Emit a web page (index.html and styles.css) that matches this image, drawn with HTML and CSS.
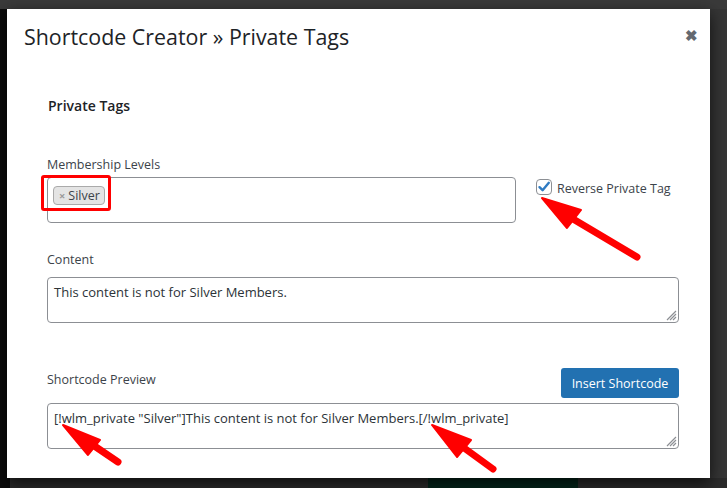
FILE: index.html
```html
<!DOCTYPE html>
<html lang="en">
<head>
    <meta charset="UTF-8">
    <meta name="viewport" content="width=device-width, initial-scale=1.0">
    <title>Shortcode Creator - Private Tags</title>
    <link rel="stylesheet" href="styles.css">
</head>
<body>
    <div class="backdrop">
        <div class="modal">
            <header class="modal-header">
                <h1>Shortcode Creator &raquo; Private Tags</h1>
                <span class="modal-close">&#10006;</span>
            </header>
            <section class="modal-body">
                <h2>Private Tags</h2>

                <label class="field-label">Membership Levels</label>
                <div class="level-row">
                    <div class="select-box">
                        <span class="tag"><span class="tag-remove">&times;</span>Silver</span>
                        <span class="highlight"></span>
                    </div>
                    <label class="check">
                        <span class="check-box">
                            <svg width="14" height="14" viewBox="0 0 14 14"><path d="M2.5 7.2 L5.6 10.2 L11.8 2.8" fill="none" stroke="#2f7bc2" stroke-width="2.4" stroke-linecap="round" stroke-linejoin="round"/></svg>
                        </span>
                        <span class="check-text">Reverse Private Tag</span>
                    </label>
                </div>

                <label class="field-label content-label">Content</label>
                <div class="text-wrap">
                    <textarea class="text-box">This content is not for Silver Members.</textarea>
                    <svg class="grip" width="12" height="12" viewBox="0 0 12 12"><path d="M11 2 L2 11 M11 5 L5 11 M11 8 L8 11" stroke="#8c8f94" stroke-width="1.2"/></svg>
                </div>

                <div class="preview-row">
                    <label class="field-label">Shortcode Preview</label>
                    <button class="insert-btn">Insert Shortcode</button>
                </div>
                <div class="text-wrap">
                    <textarea class="text-box">[!wlm_private "Silver"]This content is not for Silver Members.[/!wlm_private]</textarea>
                    <svg class="grip" width="12" height="12" viewBox="0 0 12 12"><path d="M11 2 L2 11 M11 5 L5 11 M11 8 L8 11" stroke="#8c8f94" stroke-width="1.2"/></svg>
                </div>
            </section>
        </div>
        <div class="page-bottom">
            <div class="green-block"></div>
        </div>
    </div>

    <svg class="arrows" width="727" height="488" viewBox="0 0 727 488">
        <g fill="#f00" stroke="#f00" stroke-linecap="round" stroke-linejoin="round">
            <line x1="637" y1="257" x2="568" y2="216" stroke-width="7"/>
            <polygon points="542,198 581,210 567,228" stroke-width="2"/>
            <line x1="118" y1="462" x2="90" y2="443" stroke-width="7"/>
            <polygon points="63,425 100,440 88,455" stroke-width="2"/>
            <line x1="493" y1="469" x2="460" y2="445" stroke-width="7"/>
            <polygon points="432,425 471,440 457,457" stroke-width="2"/>
        </g>
    </svg>
</body>
</html>
```

FILE: styles.css
```css
body, html {
    margin: 0;
    padding: 0;
    font-family: "Open Sans", Lato, sans-serif;
}

body {
    width: 727px;
    height: 488px;
    overflow: hidden;
    position: relative;
    background: linear-gradient(to right, #0b0b0b 7px, #353535 7px);
}

.backdrop {
    padding-top: 9px;
    background: linear-gradient(to bottom, #3a3a3a 9px, transparent 9px);
}

.modal {
    margin-left: 7px;
    width: 703px;
    height: 469px;
    background: #fff;
    box-shadow: 0 5px 15px rgba(0, 0, 0, 0.7);
    position: relative;
}

.modal-header {
    display: flex;
    align-items: center;
    justify-content: space-between;
    padding: 13px 12px 0 17px;
}

.modal-header h1 {
    margin: 0;
    font-size: 21.4px;
    line-height: 30px;
    font-weight: 400;
    color: #1d2327;
}

.modal-close {
    font-size: 15px;
    color: #646970;
    font-weight: bold;
    margin-top: -4px;
}

.modal-body {
    padding: 44px 31px 0 40px;
}

.modal-body h2 {
    margin: 0 0 40px 1px;
    font-size: 14px;
    line-height: 20px;
    font-weight: 600;
    color: #1d2327;
}

.field-label {
    display: block;
    font-size: 12.5px;
    line-height: 18px;
    color: #3c434a;
    margin-bottom: 3px;
}

.content-label {
    margin-top: 28px;
    margin-bottom: 8px;
}

.level-row {
    display: flex;
    align-items: flex-start;
    gap: 20px;
}

.select-box {
    position: relative;
    box-sizing: border-box;
    width: 469px;
    height: 46px;
    border: 1px solid #8c8f94;
    border-radius: 4px;
    padding: 5px;
}

.tag {
    display: inline-flex;
    align-items: center;
    box-sizing: border-box;
    height: 19px;
    padding: 0 4px 0 5px;
    background: #e4e4e4;
    border: 1px solid #aaa;
    border-radius: 4px;
    font-size: 12.5px;
    color: #3c434a;
}

.tag-remove {
    color: #999;
    font-size: 11px;
    font-weight: bold;
    margin-right: 3px;
}

.highlight {
    position: absolute;
    left: -7px;
    top: -3px;
    width: 64px;
    height: 30px;
    border: 3px solid #f00;
    border-radius: 3px;
}

.check {
    display: flex;
    align-items: flex-start;
    gap: 5px;
    margin-top: 2px;
    font-size: 12.5px;
    color: #3c434a;
}

.check-text {
    line-height: 18px;
    padding-top: 1px;
}

.check-box {
    display: flex;
    align-items: center;
    justify-content: center;
    box-sizing: border-box;
    width: 16px;
    height: 16px;
    border: 1px solid #8c8f94;
    border-radius: 4px;
}

.text-wrap {
    position: relative;
    width: 632px;
}

.text-box {
    display: block;
    box-sizing: border-box;
    width: 632px;
    height: 46px;
    margin: 0;
    padding: 4px 6px;
    border: 1px solid #8c8f94;
    border-radius: 4px;
    font-family: "Open Sans", Lato, sans-serif;
    font-size: 13px;
    line-height: 20px;
    color: #2c3338;
    resize: none;
}

.grip {
    position: absolute;
    right: 2px;
    bottom: 2px;
}

.preview-row {
    display: flex;
    align-items: flex-end;
    justify-content: space-between;
    margin-top: 45px;
    margin-bottom: 5px;
}

.preview-row .field-label {
    margin-bottom: 9px;
}

button.insert-btn {
    width: 118px;
    height: 30px;
    background-color: #2271b1;
    color: #fff;
    border: none;
    border-radius: 3px;
    font-family: "Open Sans", Lato, sans-serif;
    font-size: 12.5px;
    padding: 0;
}

.page-bottom {
    height: 10px;
    padding-left: 428px;
    background: linear-gradient(to right, #0b0b0b 10px, #2b2b2b 10px);
}

.green-block {
    width: 150px;
    height: 10px;
    background: #03251a;
}

.arrows {
    position: absolute;
    top: 0;
    left: 0;
    pointer-events: none;
}
```
